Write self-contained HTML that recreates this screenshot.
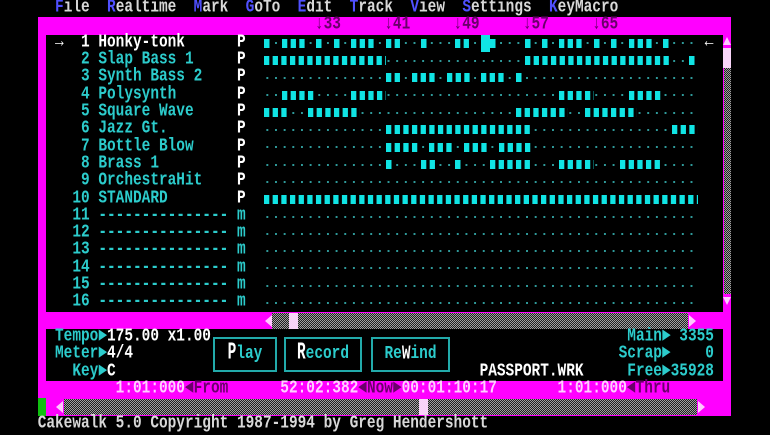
<!DOCTYPE html>
<html><head><meta charset="utf-8"><style>
*{margin:0;padding:0;box-sizing:border-box}
body{width:770px;height:433px;background:#000;overflow:hidden;position:relative;font-family:"Liberation Mono","DejaVu Sans Mono",monospace}
.a{position:absolute}
.t{position:absolute;left:37.7px;height:17.32px;line-height:17.32px;font-size:14.45px;font-weight:bold;white-space:pre;transform:scaleY(1.3);transform-origin:50% 55%;color:#2ccccc}
.w{color:#fff}.g{color:#d8d8d8}.b{color:#5050ff}.p{color:#6a006a}.k{color:#ffd0ff}
.row{position:absolute;left:0;width:770px;height:17.32px}
.dots{position:absolute;left:263.1px;width:433.5px;top:7.7px;height:2px;background:linear-gradient(90deg,transparent 3.3px,#2f9a9a 3.3px,#2f9a9a 5.3px,transparent 5.3px) 0 0/8.67px 2px repeat-x}
.r{position:absolute;top:4.2px;height:9px;background:linear-gradient(90deg,#10e4e4 0,#10e4e4 5.5px,transparent 5.5px) 0 0/8.67px 9px repeat-x}
.grey{position:absolute;background:repeating-conic-gradient(#a0a0a0 0 25%,#202020 0 50%) 0 0/2px 2px}
.btn{position:absolute;top:337px;height:35px;border:2px solid #22aaaa;color:#2ccccc;font-size:14.45px;font-weight:bold;line-height:31px;text-align:center}
.btn span{display:inline-block;transform:scaleY(1.3)}
</style></head><body>
<div class="a" style="left:37.7px;top:17.32px;width:693.6px;height:398.4px;background:#ff00ff"></div>
<div class="a" style="left:46.4px;top:34.64px;width:676.2px;height:277.1px;background:#000"></div>
<div class="a" style="left:46.4px;top:329.08px;width:676.2px;height:51.96px;background:#000"></div>

<div class="t g" style="top:0">  <span class="b">F</span>ile  <span class="b">R</span>ealtime  <span class="b">M</span>ark  <span class="b">G</span>oTo  <span class="b">E</span>dit  <span class="b">T</span>rack  <span class="b">V</span>iew  <span class="b">S</span>ettings  <span class="b">K</span>eyMacro</div>
<div class="t p" style="top:17.32px">                                ↓33     ↓41     ↓49     ↓57     ↓65</div>

<div class="row" style="top:34.64px"><div class="dots"></div>
<div class="r" style="left:264.4px;width:8.67px"></div><div class="r" style="left:281.7px;width:26.01px"></div><div class="r" style="left:316.4px;width:8.67px"></div><div class="r" style="left:333.8px;width:8.67px"></div><div class="r" style="left:351.1px;width:26.01px"></div><div class="r" style="left:385.8px;width:17.34px"></div><div class="r" style="left:420.5px;width:8.67px"></div><div class="r" style="left:455.1px;width:17.34px"></div><div class="r" style="left:489.8px;width:8.67px"></div><div class="r" style="left:524.5px;width:8.67px"></div><div class="r" style="left:541.8px;width:8.67px"></div><div class="r" style="left:559.2px;width:26.01px"></div><div class="r" style="left:593.9px;width:8.67px"></div><div class="r" style="left:611.2px;width:8.67px"></div><div class="r" style="left:628.5px;width:26.01px"></div><div class="r" style="left:663.2px;width:8.67px"></div>
<div class="a" style="left:480.5px;top:0.5px;width:9px;height:17px;background:#10e4e4"></div>
</div>
<div class="t w" style="top:34.64px">  →  1 Honky-tonk      P                                                     ←</div>

<div class="row" style="top:51.96px"><div class="dots"></div><div class="r" style="left:264.4px;width:121.4px"></div><div class="r" style="left:524.5px;width:147.4px"></div><div class="r" style="left:689.2px;width:8.67px"></div></div>
<div class="t" style="top:51.96px">     2 Slap Bass 1     <span class="w">P</span></div>

<div class="row" style="top:69.28px"><div class="dots"></div><div class="r" style="left:385.8px;width:17.34px"></div><div class="r" style="left:411.8px;width:26.01px"></div><div class="r" style="left:446.5px;width:26.01px"></div><div class="r" style="left:481.2px;width:26.01px"></div><div class="r" style="left:515.8px;width:8.67px"></div></div>
<div class="t" style="top:69.28px">     3 Synth Bass 2    <span class="w">P</span></div>

<div class="row" style="top:86.6px"><div class="dots"></div><div class="r" style="left:281.7px;width:34.68px"></div><div class="r" style="left:351.1px;width:34.68px"></div><div class="r" style="left:559.2px;width:34.68px"></div><div class="r" style="left:628.5px;width:34.68px"></div></div>
<div class="t" style="top:86.6px">     4 Polysynth       <span class="w">P</span></div>

<div class="row" style="top:103.92px"><div class="dots"></div><div class="r" style="left:264.4px;width:26.01px"></div><div class="r" style="left:307.8px;width:52.02px"></div><div class="r" style="left:515.8px;width:52.02px"></div><div class="r" style="left:585.2px;width:52.02px"></div></div>
<div class="t" style="top:103.92px">     5 Square Wave     <span class="w">P</span></div>

<div class="row" style="top:121.24px"><div class="dots"></div><div class="r" style="left:385.8px;width:147.4px"></div><div class="r" style="left:671.9px;width:26.01px"></div></div>
<div class="t" style="top:121.24px">     6 Jazz Gt.        <span class="w">P</span></div>

<div class="row" style="top:138.56px"><div class="dots"></div><div class="r" style="left:385.8px;width:34.68px"></div><div class="r" style="left:429.1px;width:26.01px"></div><div class="r" style="left:463.8px;width:26.01px"></div><div class="r" style="left:498.5px;width:34.68px"></div></div>
<div class="t" style="top:138.56px">     7 Bottle Blow     <span class="w">P</span></div>

<div class="row" style="top:155.88px"><div class="dots"></div><div class="r" style="left:385.8px;width:8.67px"></div><div class="r" style="left:420.5px;width:17.34px"></div><div class="r" style="left:455.1px;width:8.67px"></div><div class="r" style="left:489.8px;width:43.35px"></div><div class="r" style="left:559.2px;width:34.68px"></div><div class="r" style="left:619.9px;width:43.35px"></div></div>
<div class="t" style="top:155.88px">     8 Brass 1         <span class="w">P</span></div>

<div class="row" style="top:173.2px"><div class="dots"></div></div>
<div class="t" style="top:173.2px">     9 OrchestraHit    <span class="w">P</span></div>

<div class="row" style="top:190.52px"><div class="r" style="left:264.4px;width:433.5px"></div></div>
<div class="t" style="top:190.52px">    10 STANDARD        <span class="w">P</span></div>

<div class="row" style="top:207.84px"><div class="dots"></div></div>
<div class="t" style="top:207.84px">    11 --------------- m</div>
<div class="row" style="top:225.16px"><div class="dots"></div></div>
<div class="t" style="top:225.16px">    12 --------------- m</div>
<div class="row" style="top:242.48px"><div class="dots"></div></div>
<div class="t" style="top:242.48px">    13 --------------- m</div>
<div class="row" style="top:259.8px"><div class="dots"></div></div>
<div class="t" style="top:259.8px">    14 --------------- m</div>
<div class="row" style="top:277.12px"><div class="dots"></div></div>
<div class="t" style="top:277.12px">    15 --------------- m</div>
<div class="row" style="top:294.44px"><div class="dots"></div></div>
<div class="t" style="top:294.44px">    16 --------------- m</div>

<div class="grey" style="left:723.5px;top:68px;width:7px;height:226px"></div>
<div class="a" style="left:723px;top:48px;width:8px;height:20px;background:#f8d4f8"></div>
<div class="a" style="left:723px;top:37px;width:0;height:0;border-left:4px solid transparent;border-right:4px solid transparent;border-bottom:8px solid #ffc8ff"></div>
<div class="a" style="left:723px;top:297px;width:0;height:0;border-left:4px solid transparent;border-right:4px solid transparent;border-top:8px solid #ffc8ff"></div>

<div class="grey" style="left:271.8px;top:313px;width:416.2px;height:16px"></div>
<div class="a" style="left:289.1px;top:313px;width:8.7px;height:16px;background:#f8d4f8"></div>
<div class="a" style="left:265px;top:315px;width:0;height:0;border-top:6px solid transparent;border-bottom:6px solid transparent;border-right:7px solid #ffc8ff"></div>
<div class="a" style="left:689px;top:315px;width:0;height:0;border-top:6px solid transparent;border-bottom:6px solid transparent;border-left:7px solid #ffc8ff"></div>

<div class="t" style="top:329.08px">  Tempo►<span class="w">175.00 x1.00</span></div>
<div class="t" style="top:346.4px">  Meter►<span class="w">4/4</span></div>
<div class="t" style="top:363.72px">    Key►<span class="w">C</span>                                          <span class="w">PASSPORT.WRK</span></div>
<div class="t" style="top:329.08px;left:627.3px">Main► 3355</div>
<div class="t" style="top:346.4px;left:618.6px">Scrap►    0</div>
<div class="t" style="top:363.72px;left:627.3px">Free►35928</div>
<div class="btn" style="left:213px;width:64px"><span><span class="w">P</span>lay</span></div>
<div class="btn" style="left:284px;width:78px"><span><span class="w">R</span>ecord</span></div>
<div class="btn" style="left:371px;width:79px"><span>Re<span class="w">w</span>ind</span></div>

<div class="t k" style="top:381.04px">         1:01:000<span class="p">◄From</span>      52:02:382<span class="p">◄Now►</span>00:01:10:17       1:01:000<span class="p">◄Thru</span></div>

<div class="a" style="left:37.7px;top:398.4px;width:8px;height:17.3px;background:#10c010"></div>
<div class="grey" style="left:63.7px;top:399px;width:633.6px;height:16px"></div>
<div class="a" style="left:419.2px;top:399px;width:8.7px;height:16px;background:#f8d4f8"></div>
<div class="a" style="left:56px;top:401px;width:0;height:0;border-top:6px solid transparent;border-bottom:6px solid transparent;border-right:7px solid #ffc8ff"></div>
<div class="a" style="left:698px;top:401px;width:0;height:0;border-top:6px solid transparent;border-bottom:6px solid transparent;border-left:7px solid #ffc8ff"></div>

<div class="t g" style="top:415.68px">Cakewalk 5.0 Copyright 1987-1994 by Greg Hendershott</div>
</body></html>
